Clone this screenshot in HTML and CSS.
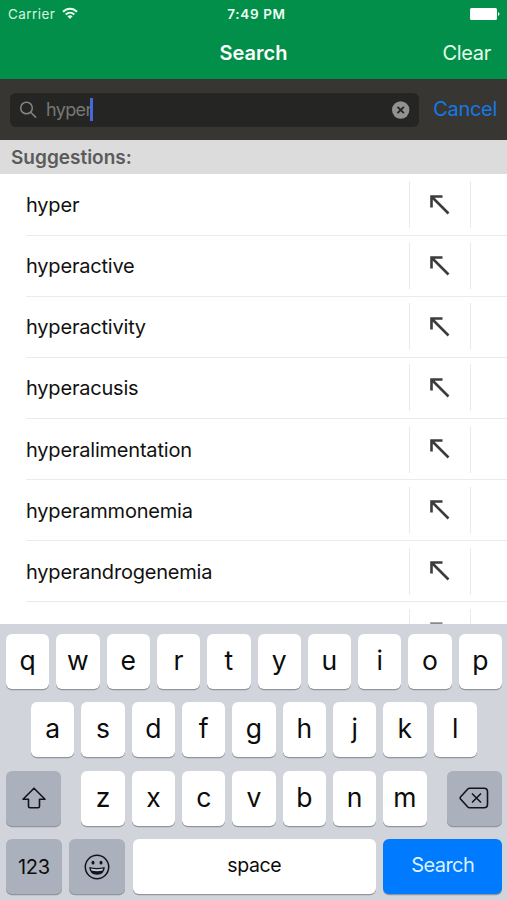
FILE: index.html
```html
<!DOCTYPE html>
<html lang="en">
<head>
<meta charset="utf-8">
<title>Search</title>
<link rel="stylesheet" href="styles.css">
</head>
<body>
<svg class="defs" width="0" height="0" aria-hidden="true">
  <symbol id="arrow" viewBox="0 0 20 20"><path d="M1.5 12.5V1.5H12.5M1.5 1.5L18.5 18.5" fill="none" stroke="#3c3c3c" stroke-width="2.6"/></symbol>
</svg>
<div class="screen">
  <header class="header">
    <div class="status">
      <div class="carrier"><span>Carrier</span>
        <svg width="16" height="13" viewBox="0 0 16 13"><g fill="none" stroke="#e9fff0" stroke-width="2"><path d="M1 4.8C5 .7 11 .7 15 4.8"/><path d="M3.7 7.5C6.2 5.1 9.8 5.1 12.3 7.5"/></g><path d="M5.4 9.3Q8 7.2 10.6 9.3L8 12Z" fill="#e9fff0"/></svg>
      </div>
      <span class="time">7:49 PM</span>
      <svg class="battery" width="30" height="12" viewBox="0 0 30 12"><rect width="27" height="12" rx="1.5" fill="#fff"/><path d="M28 4Q31 6 28 8Z" fill="#fff"/></svg>
    </div>
    <nav class="nav"><span></span><h1>Search</h1><span class="clear">Clear</span></nav>
  </header>
  <div class="searchbar">
    <div class="field">
      <svg width="18" height="18" viewBox="0 0 18 18" fill="none" stroke="#858583" stroke-width="1.5"><circle cx="7.5" cy="7" r="5.8"/><path d="M11.7 11.2L17.1 16.6"/></svg>
      <span class="query">hyper</span><span class="caret"></span>
      <svg class="reset" width="18" height="18" viewBox="0 0 18 18"><circle cx="8.7" cy="9" r="8.7" fill="#929290"/><path d="M5.5 5.8L11.9 12.2M11.9 5.8L5.5 12.2" stroke="#242422" stroke-width="1.8"/></svg>
    </div>
    <span class="cancel">Cancel</span>
  </div>
  <h2 class="section">Suggestions:</h2>
  <ul class="list">
    <li><span class="word">hyper</span><span class="fill"><svg width="20" height="20"><use href="#arrow"/></svg></span></li>
    <li><span class="word">hyperactive</span><span class="fill"><svg width="20" height="20"><use href="#arrow"/></svg></span></li>
    <li><span class="word">hyperactivity</span><span class="fill"><svg width="20" height="20"><use href="#arrow"/></svg></span></li>
    <li><span class="word">hyperacusis</span><span class="fill"><svg width="20" height="20"><use href="#arrow"/></svg></span></li>
    <li><span class="word">hyperalimentation</span><span class="fill"><svg width="20" height="20"><use href="#arrow"/></svg></span></li>
    <li><span class="word">hyperammonemia</span><span class="fill"><svg width="20" height="20"><use href="#arrow"/></svg></span></li>
    <li><span class="word">hyperandrogenemia</span><span class="fill"><svg width="20" height="20"><use href="#arrow"/></svg></span></li>
    <li class="partial"><span class="word"></span><span class="fill"><svg width="20" height="20"><use href="#arrow"/></svg></span></li>
  </ul>
  <div class="keyboard">
    <div class="keys"><b>q</b><b>w</b><b>e</b><b>r</b><b>t</b><b>y</b><b>u</b><b>i</b><b>o</b><b>p</b></div>
    <div class="keys"><b>a</b><b>s</b><b>d</b><b>f</b><b>g</b><b>h</b><b>j</b><b>k</b><b>l</b></div>
    <div class="keys spread">
      <b class="gray"><svg width="26" height="24" viewBox="0 0 26 24"><path d="M13 2.2L24 13.2H18.5V20.2Q18.5 21.7 17 21.7H9Q7.5 21.7 7.5 20.2V13.2H2Z" fill="none" stroke="#10141c" stroke-width="1.6" stroke-linejoin="round"/></svg></b>
      <div class="letters"><b>z</b><b>x</b><b>c</b><b>v</b><b>b</b><b>n</b><b>m</b></div>
      <b class="gray"><svg width="30" height="22" viewBox="0 0 30 22" fill="none" stroke="#10141c" stroke-width="1.6" stroke-linejoin="round"><path d="M10.5 1.2H25Q28.5 1.2 28.5 4.7V17.3Q28.5 20.8 25 20.8H10.5Q9.5 20.8 8.8 20L1.5 12Q.8 11 1.5 10L8.8 2Q9.5 1.2 10.5 1.2Z"/><path d="M13 6.5L22 15.5M22 6.5L13 15.5"/></svg></b>
    </div>
    <div class="keys bottom">
      <b class="gray num">123</b>
      <b class="gray"><svg width="26" height="26" viewBox="0 0 26 26"><circle cx="13" cy="13" r="11.7" fill="none" stroke="#10141c" stroke-width="1.5"/><ellipse cx="9" cy="8.7" rx="1.5" ry="1.9" fill="#10141c"/><ellipse cx="17" cy="8.7" rx="1.5" ry="1.9" fill="#10141c"/><path d="M5.2 13Q13 15 20.8 13Q20.5 20.7 13 20.7Q5.5 20.7 5.2 13Z" fill="#10141c"/><path d="M6.8 14.6Q13 16.1 19.2 14.6L18.5 16.5Q13 18 7.5 16.5Z" fill="#c5cad2"/></svg></b>
      <b class="space">space</b>
      <b class="go">Search</b>
    </div>
  </div>
</div>
</body>
</html>
```
FILE: styles.css
```css
* { box-sizing: border-box; }
body { margin: 0; font-family: Inter, "Liberation Sans", sans-serif; }
h1, h2, ul { margin: 0; padding: 0; }
.defs { position: absolute; }
.screen { width: 507px; height: 900px; overflow: hidden; display: flex; flex-direction: column; background: #fff; }

.header { height: 79px; background: #028f49; color: #fff; flex: none; }
.status { height: 27px; padding: 0 7px 0 8px; display: grid; grid-template-columns: 1fr auto 1fr; align-items: center; font-size: 13.5px; }
.carrier { display: flex; align-items: center; gap: 7px; color: #d5f7e0; letter-spacing: .45px; }
.time { font-weight: 600; font-size: 13.5px; letter-spacing: .65px; color: #effff4; padding-left: 5px; }
.battery { justify-self: end; }
.nav { height: 52px; padding: 0 16px 1px; display: grid; grid-template-columns: 1fr auto 1fr; align-items: center; font-size: 20px; }
.nav h1 { font-size: 20px; font-weight: 600; letter-spacing: 0; }
.clear { justify-self: end; color: #e2ffeb; letter-spacing: -.3px; }

.searchbar { height: 61px; flex: none; background: #373632; padding: 0 10px; display: flex; align-items: center; justify-content: space-between; }
.field { width: 409px; height: 34px; border-radius: 6px; background: #252523; padding: 0 9px; display: flex; align-items: center; }
.query { margin-left: 9px; font-size: 18px; color: #777775; letter-spacing: -.65px; }
.caret { width: 3px; height: 23px; background: #4668dc; margin-left: -2px; }
.reset { margin-left: auto; }
.cancel { color: #1479e6; font-size: 20px; letter-spacing: -.3px; padding-bottom: 1px; }

.section { height: 34px; flex: none; background: #dcdcdc; padding-left: 11px; font-size: 19px; line-height: 35px; font-weight: 600; color: #5b5b5b; letter-spacing: 0; }
.list { height: 450px; flex: none; overflow: hidden; list-style: none; padding-top: .6px; }
.list li { height: 61.1px; margin-left: 26px; border-bottom: 1px solid #ebebeb; display: flex; align-items: center; }
.word { flex: 1; font-size: 20px; letter-spacing: -.2px; color: #111; padding-top: 1px; }
.fill { width: 62px; height: 47px; margin-right: 36px; border: solid #ebebeb; border-width: 0 1px; display: flex; align-items: center; justify-content: center; }
.fill svg { margin-right: 1px; }
.partial svg { opacity: .6; }

.keyboard { height: 276px; flex: none; background: #d1d4da; padding: 9.5px 5px 0 6px; display: flex; flex-direction: column; gap: 13.5px; color: #0c0c0c; }
.keys, .letters { display: flex; justify-content: center; gap: 7px; }
.keys b { width: 43.3px; height: 55px; border-radius: 6px; background: #fff; box-shadow: 0 1.3px 0 #92959b; font-weight: 400; font-size: 26.5px; line-height: 52px; text-align: center; flex: none; }
.keys.spread { justify-content: space-between; }
.keys .gray { width: 55.3px; background: #abb1bc; display: flex; align-items: center; justify-content: center; }
.keys.bottom { gap: 7px; justify-content: space-between; }
.keys.bottom .gray { width: 55.7px; }
.keys.bottom .num { font-size: 20px; letter-spacing: -.4px; }
.keys.bottom .space { width: 243px; font-size: 19.5px; letter-spacing: -.4px; }
.keys.bottom .go { width: 118.5px; background: #007aff; color: #dcf1ff; font-size: 20px; letter-spacing: -.6px; }
```
